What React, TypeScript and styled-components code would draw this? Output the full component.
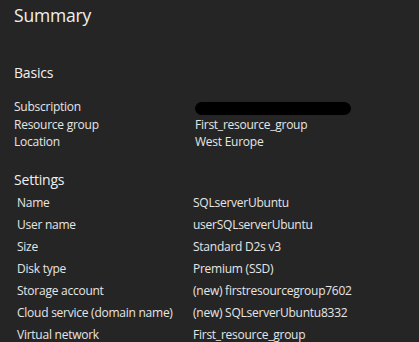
import React from "react";
import styled, { createGlobalStyle } from "styled-components";

const Global = createGlobalStyle`
  html, body { margin: 0; padding: 0; background: #252525; }
  body { font-family: "Open Sans", "Noto Sans", sans-serif; color: #e8e8e8; }
`;

const Page = styled.div`
  width: 419px;
  height: 342px;
  overflow: hidden;
  background: #252525;
  padding: 0 0 0 14px;
  box-sizing: border-box;
`;

const Title = styled.h1`
  margin: 0;
  padding-top: 2px;
  font-size: 17.5px;
  font-weight: 400;
  line-height: 26px;
  letter-spacing: -0.2px;
  color: #f0f0f0;
`;

const SectionTitle = styled.h2<{ $top: number }>`
  margin: ${(p) => p.$top}px 0 0 0;
  font-size: 14px;
  font-weight: 400;
  line-height: 20px;
  letter-spacing: -0.2px;
  color: #f0f0f0;
`;

const Table = styled.div<{ $indent: number; $labelW: number; $rowH: number; $top: number }>`
  display: grid;
  grid-template-columns: ${(p) => p.$labelW}px 1fr;
  grid-auto-rows: ${(p) => p.$rowH}px;
  align-items: center;
  margin-top: ${(p) => p.$top}px;
  padding-left: ${(p) => p.$indent}px;
  font-size: 12px;
  letter-spacing: -0.25px;
  color: #e6e6e6;
`;

const Cell = styled.div`
  white-space: nowrap;
`;

const Redacted = styled.span`
  display: inline-block;
  width: 156px;
  height: 13px;
  border-radius: 7px;
  background: #000;
  vertical-align: middle;
`;

const basics: [string, React.ReactNode][] = [
  ["Subscription", <Redacted key="r" />],
  ["Resource group", "First_resource_group"],
  ["Location", "West Europe"],
];

const settings: [string, string][] = [
  ["Name", "SQLserverUbuntu"],
  ["User name", "userSQLserverUbuntu"],
  ["Size", "Standard D2s v3"],
  ["Disk type", "Premium (SSD)"],
  ["Storage account", "(new) firstresourcegroup7602"],
  ["Cloud service (domain name)", "(new) SQLserverUbuntu8332"],
  ["Virtual network", "First_resource_group"],
];

export default function App() {
  return (
    <Page>
      <Global />
      <Title>Summary</Title>
      <SectionTitle $top={35}>Basics</SectionTitle>
      <Table $indent={0} $labelW={181} $rowH={17.5} $top={15}>
        {basics.map(([k, v]) => (
          <React.Fragment key={k}>
            <Cell>{k}</Cell>
            <Cell>{v}</Cell>
          </React.Fragment>
        ))}
      </Table>
      <SectionTitle $top={19}>Settings</SectionTitle>
      <Table $indent={3} $labelW={176} $rowH={22} $top={2}>
        {settings.map(([k, v]) => (
          <React.Fragment key={k}>
            <Cell>{k}</Cell>
            <Cell>{v}</Cell>
          </React.Fragment>
        ))}
      </Table>
    </Page>
  );
}
